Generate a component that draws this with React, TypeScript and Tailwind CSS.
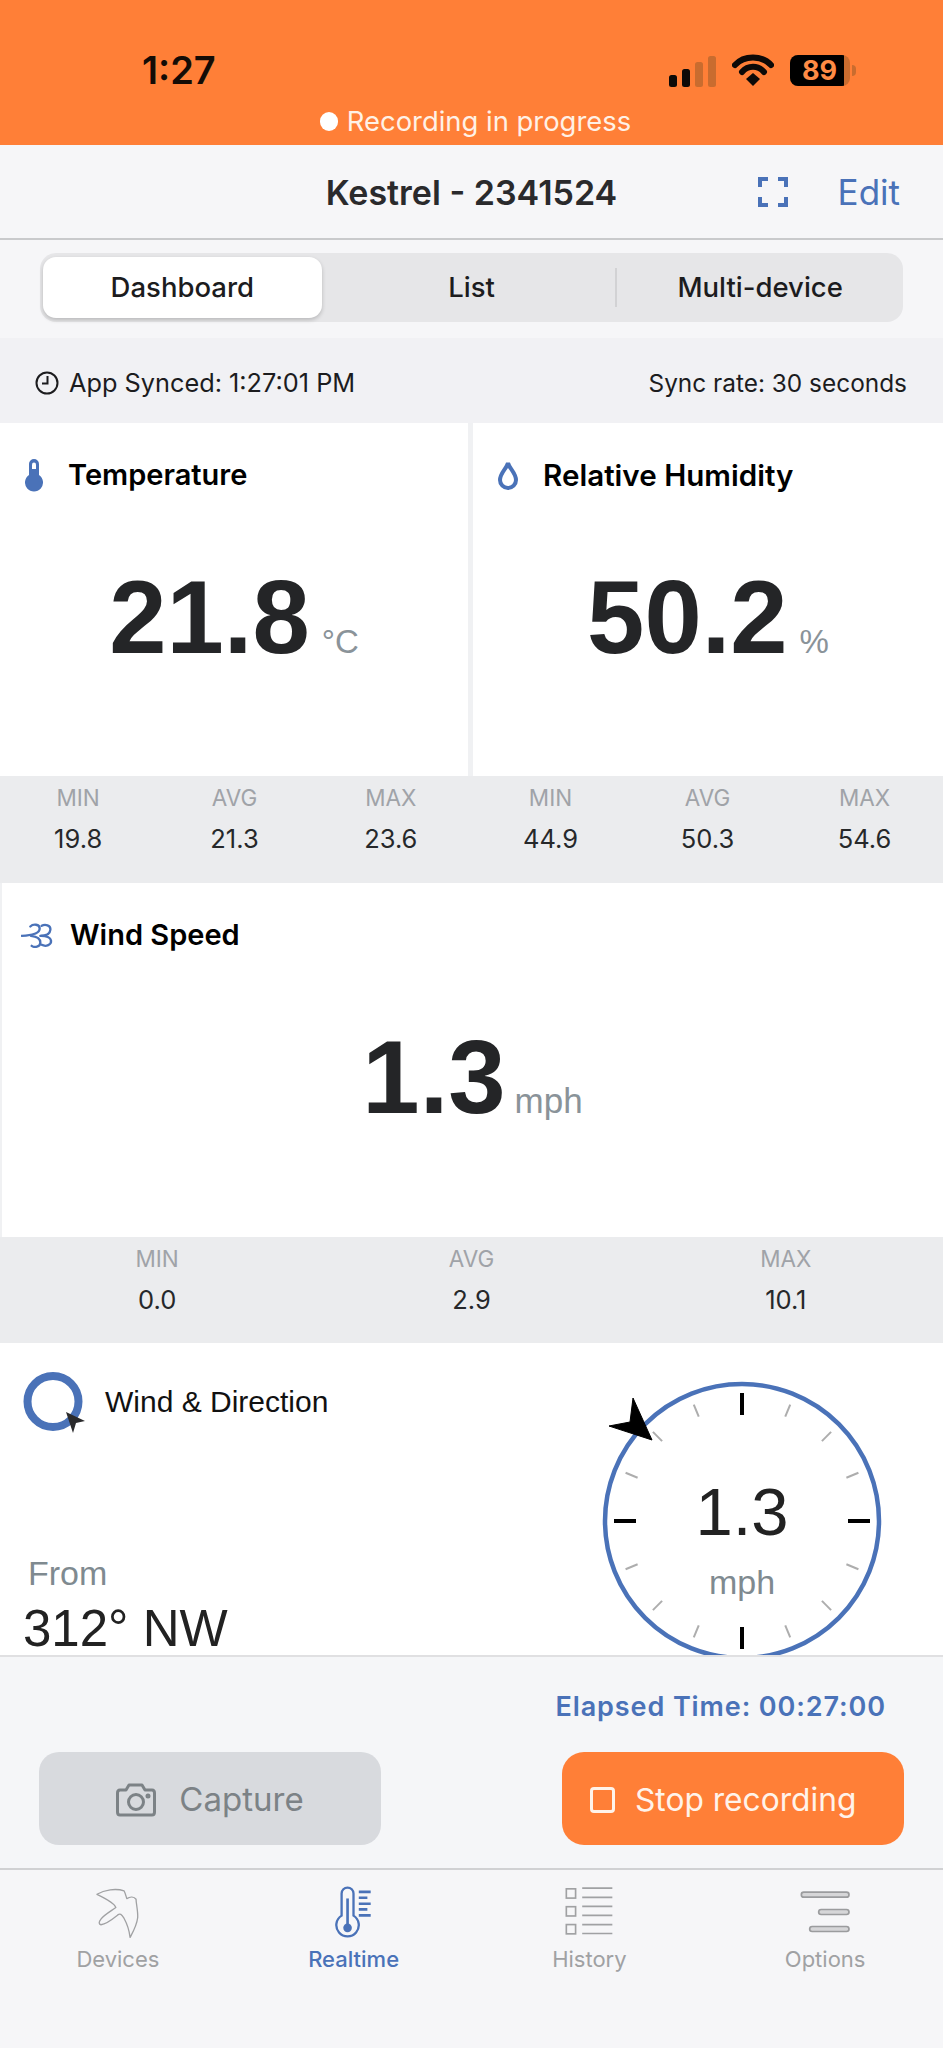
import React from 'react';

const BLUE = '#4a72b8';

const stats = {
    temp: [['MIN', '19.8'], ['AVG', '21.3'], ['MAX', '23.6']],
    humidity: [['MIN', '44.9'], ['AVG', '50.3'], ['MAX', '54.6']],
    wind: [['MIN', '0.0'], ['AVG', '2.9'], ['MAX', '10.1']],
};

const StatRow = ({ items, className }: { items: string[][]; className: string }) => (
    <div className={`grid grid-cols-3 bg-[#ebecee] pt-[9px] ${className}`}>
        {items.map(([label, value]) => (
            <div key={label} className="flex flex-col items-center">
                <span className="h-[26px] text-[22.500px] leading-[26px] text-[#a0a3a8]">{label}</span>
                <span className="mt-[13px] h-[30px] text-[25.500px] leading-[30px] text-[#26282a]">{value}</span>
            </div>
        ))}
    </div>
);

const Reading = ({ value, unit, unitClass, icon, title, titleClass }: { value: string; unit: string; unitClass: string; icon: React.ReactNode; title: string; titleClass: string }) => (
    <div className="h-full flex flex-col pt-[36px]">
        <div className={`flex items-center h-[32px] ${titleClass}`}>
            {icon}
            <span className="font-semibold text-black leading-[32px]">{title}</span>
        </div>
        <div className="mt-[75px] flex items-baseline justify-center font-['Liberation_Sans',sans-serif]">
            <span className="text-[103px] leading-[103px] font-bold text-[#242527]">{value}</span>
            <span className={`text-[#8a9399] ${unitClass}`}>{unit}</span>
        </div>
    </div>
);

const GaugeTicks = () => {
    const ticks = [];
    for (let i = 0; i < 16; i++) {
        const a = (i * 22.5 * Math.PI) / 180;
        const major = i % 4 === 0;
        const r1 = major ? 128 : 126;
        const r2 = major ? 106 : 113;
        ticks.push(
            <line
                key={i}
                x1={140 + r1 * Math.sin(a)}
                y1={140 - r1 * Math.cos(a)}
                x2={140 + r2 * Math.sin(a)}
                y2={140 - r2 * Math.cos(a)}
                stroke={major ? '#000' : '#adadad'}
                strokeWidth={major ? 4 : 2}
            />
        );
    }
    return <>{ticks}</>;
};

export default function App() {
    return (
        <div className="w-[943px] h-[2048px] overflow-hidden flex flex-col bg-[#f5f6f8] font-[Inter,sans-serif]">
            {/* Status bar */}
            <div className="h-[145px] shrink-0 bg-[#ff7f37] pt-[50px]">
                <div className="h-[40px] flex items-center justify-between pl-[142px] pr-[87px]">
                    <span className="text-[38px] font-semibold leading-[40px] text-[#140c06]">1:27</span>
                    <div className="flex items-center">
                        <svg width="47" height="31" viewBox="0 0 47 31" className="mt-[2px]">
                            <rect x="0" y="19" width="8" height="12" rx="2.5" fill="#0d0a08" />
                            <rect x="13" y="13" width="8" height="18" rx="2.5" fill="#0d0a08" />
                            <rect x="26" y="6" width="8" height="25" rx="2.5" fill="#c96c2f" />
                            <rect x="39" y="0" width="8" height="31" rx="2.5" fill="#c96c2f" />
                        </svg>
                        <svg width="42" height="32" viewBox="0 0 42 32" className="ml-[16px]">
                            <path d="M3 11 C12 1 30 1 39 11" fill="none" stroke="#0d0a08" strokeWidth="6" strokeLinecap="round" />
                            <path d="M10 18 C16 11 26 11 32 18" fill="none" stroke="#0d0a08" strokeWidth="6" strokeLinecap="round" />
                            <path d="M14 25 L21 19 L28 25 L21 32 Z" fill="#0d0a08" />
                        </svg>
                        <div className="ml-[16px] flex items-center">
                            <div className="w-[60px] h-[31px] rounded-[8px] bg-[#c96c2f] overflow-hidden">
                                <div className="w-[54px] h-full bg-black flex items-center justify-center pl-[5px]">
                                    <span className="text-[27px] font-bold leading-none text-[#ff8b45]">89</span>
                                </div>
                            </div>
                            <div className="ml-[2px] w-[4px] h-[11px] rounded-r-full bg-[#c96c2f]" />
                        </div>
                    </div>
                </div>
                <div className="mt-[15px] h-[32px] pl-[8px] flex items-center justify-center">
                    <span className="w-[18px] h-[19px] rounded-full bg-white" />
                    <span className="ml-[9px] text-[27.400px] leading-[32px] text-[#fff1e6]">Recording in progress</span>
                </div>
            </div>

            {/* Nav bar */}
            <div className="h-[95px] shrink-0 bg-[#f6f6f8] border-b-2 border-[#c9cacc] pt-[1px] grid grid-cols-[1fr_auto_1fr] items-center">
                <div />
                <span className="text-[34px] font-semibold text-[#2a2a2c]">Kestrel - 2341524</span>
                <div className="flex items-center justify-end pr-[43px]">
                    <svg width="30" height="30" viewBox="0 0 30 30" fill="none" stroke={BLUE} strokeWidth="4">
                        <path d="M2 10 V2 H10 M20 2 H28 V10 M28 20 V28 H20 M10 28 H2 V20" />
                    </svg>
                    <span className="ml-[50px] text-[35px] text-[#4a72b8]">Edit</span>
                </div>
            </div>

            {/* Segmented control */}
            <div className="h-[98px] shrink-0 bg-[#f6f6f8] pt-[13px] px-[40px]">
                <div className="h-[69px] rounded-[16px] bg-[#e6e6e8] grid grid-cols-3 items-center text-[27.500px] text-[#1c1c1e]">
                    <div className="h-[61px] ml-[3px] mr-[6px] pt-[1px] rounded-[13px] bg-white shadow-[0_2px_4px_rgba(0,0,0,0.2)] flex items-center justify-center font-medium">Dashboard</div>
                    <div className="pt-[1px] text-center font-medium">List</div>
                    <div className="h-[39px] pt-[1px] border-l-2 border-[#d2d2d4] flex items-center justify-center font-medium">Multi-device</div>
                </div>
            </div>

            {/* Sync info */}
            <div className="h-[85px] shrink-0 bg-[#f1f1f4] pt-[5px] pl-[35px] pr-[36px] flex items-center justify-between text-[#1c1c1e]">
                <div className="flex items-center">
                    <svg width="24" height="24" viewBox="0 0 24 24" fill="none" stroke="#1c1c1e" strokeWidth="2">
                        <circle cx="12" cy="12" r="10.5" />
                        <path d="M12.5 5 V12.5 H7" />
                    </svg>
                    <span className="ml-[10px] text-[25.300px]">App Synced: 1:27:01 PM</span>
                </div>
                <span className="text-[24.400px]">Sync rate: 30 seconds</span>
            </div>

            {/* Temperature + humidity */}
            <div className="h-[353px] shrink-0 bg-white grid grid-cols-[468px_1fr]">
                <div>
                    <Reading
                        value="21.8"
                        unit="°C"
                        unitClass="ml-[12px] text-[33px]"
                        title="Temperature"
                        titleClass="pl-[25px] text-[29px]"
                        icon={
                            <svg width="18" height="33" viewBox="0 0 18 33" className="mr-[25px]">
                                <path d="M4 16 V5 a5 5 0 0 1 10 0 V16 a9 9 0 1 1 -10 0 Z" fill={BLUE} />
                                <path d="M7 10 V5.5 a2 2 0 0 1 4 0 V10 Z" fill="#fff" />
                            </svg>
                        }
                    />
                </div>
                <div className="border-l-[5px] border-[#f0f1f3]">
                    <Reading
                        value="50.2"
                        unit="%"
                        unitClass="ml-[12px] text-[33px]"
                        title="Relative Humidity"
                        titleClass="pl-[25px] text-[29.600px]"
                        icon={
                            <svg width="20" height="30" viewBox="0 0 20 30" fill="none" className="mr-[25px]">
                                <path d="M10 3 C11 8 18 13 18 20 a8 8 0 0 1 -16 0 C2 13 9 8 10 3 Z" stroke={BLUE} strokeWidth="4" />
                            </svg>
                        }
                    />
                </div>
            </div>
            <div className="h-[107px] shrink-0 grid grid-cols-[469px_1fr] bg-[#ebecee]">
                <StatRow items={stats.temp} className="" />
                <StatRow items={stats.humidity} className="ml-[3px]" />
            </div>

            {/* Wind speed */}
            <div className="h-[354px] shrink-0 bg-white border-l-2 border-[#f0f1f3]">
                <Reading
                    value="1.3"
                    unit="mph"
                    unitClass="ml-[9px] text-[35px]"
                    title="Wind Speed"
                    titleClass="pl-[19px] text-[29px]"
                    icon={
                        <svg width="32" height="25" viewBox="60 40 96 74" fill="none" stroke={BLUE} strokeWidth="7" strokeLinecap="round" className="mr-[17px]">
                            <path d="M88 50 C96 42 116 42 116 56 C116 68 104 76 62 78" />
                            <path d="M92 108 C100 114 118 112 118 98 C118 86 108 80 90 78" />
                            <path d="M122 48 C132 42 150 46 148 60 C147 72 135 78 118 78" />
                            <path d="M122 105 C135 112 152 105 150 92 C148 82 135 78 120 78" />
                        </svg>
                    }
                />
            </div>
            <StatRow items={stats.wind} className="h-[106px] shrink-0" />

            {/* Wind & direction */}
            <div className="h-[314px] shrink-0 bg-white border-b-2 border-[#e0e0e2] overflow-hidden flex justify-between">
                <div className="flex flex-col font-['Liberation_Sans',sans-serif]">
                    <div className="flex items-center pl-[23px] pt-[29px]">
                        <svg width="64" height="62" viewBox="23 1372 64 62">
                            <circle cx="53" cy="1401.5" r="25.5" fill="none" stroke={BLUE} strokeWidth="8" />
                            <path d="M66 1412 L85 1421 L76 1423 L73 1433 Z" fill="#2a2a2c" />
                        </svg>
                        <span className="ml-[18px] -mt-[4px] text-[30px] text-[#111]">Wind &amp; Direction</span>
                    </div>
                    <span className="mt-[119px] pl-[28px] text-[34px] leading-[40px] text-[#7f8a90]">From</span>
                    <span className="mt-[14px] pl-[23px] text-[51px] leading-[44px] text-[#222]">312° NW</span>
                </div>
                <div className="relative w-[280px] h-[280px] mt-[38px] mr-[61px] shrink-0 font-['Liberation_Sans',sans-serif]">
                    <svg width="280" height="280" viewBox="0 0 280 280" className="overflow-visible">
                        <circle cx="140" cy="140" r="137" fill="none" stroke={BLUE} strokeWidth="4.5" />
                        <GaugeTicks />
                        <path d="M50 59 L31 17 L28 41 L7 45 Z" fill="#000" stroke="#000" strokeLinejoin="round" />
                    </svg>
                    <div className="absolute inset-0 flex flex-col items-center pt-[97px]">
                        <span className="text-[67px] leading-[67px] text-[#222]">1.3</span>
                        <span className="mt-[17px] text-[34px] leading-[40px] text-[#7f8a90]">mph</span>
                    </div>
                </div>
            </div>

            {/* Actions */}
            <div className="h-[211px] shrink-0 bg-[#f5f6f8]">
                <div className="h-[95px] flex items-start justify-end pr-[57px] pt-[33px]">
                    <span className="text-[27px] leading-[34px] font-semibold tracking-[0.9px] text-[#4a72b8]">Elapsed Time: 00:27:00</span>
                </div>
                <div className="flex justify-between px-[39px]">
                    <div className="w-[342px] h-[93px] rounded-[20px] bg-[#d8dade] flex items-center justify-center pt-[2px] text-[33px] text-[#7c8286]">
                        <svg width="40" height="34" viewBox="0 0 40 34" fill="none" stroke="#7c8286" strokeWidth="3" strokeLinejoin="round">
                            <path d="M4 7 H10 L13 2 H26 L29 7 H36 Q38.500 7 38.500 10 V29 Q38.500 32 36 32 H4 Q1.500 32 1.500 29 V10 Q1.500 7 4 7 Z" />
                            <circle cx="20" cy="19" r="7.500" />
                            <circle cx="32" cy="13" r="1" fill="#7c8286" />
                        </svg>
                        <span className="ml-[23px]">Capture</span>
                    </div>
                    <div className="w-[342px] h-[93px] rounded-[22px] bg-[#ff7f37] flex items-center pl-[28px] pt-[2px] text-[31.700px] text-[#fff3ea]">
                        <span className="w-[25px] h-[26px] rounded-[4px] border-[3px] border-[#fff3ea]" />
                        <span className="ml-[20px]">Stop recording</span>
                    </div>
                </div>
            </div>

            {/* Tab bar */}
            <div className="flex-1 border-t-2 border-[#d0d1d3] bg-[#f6f6f8] grid grid-cols-4 text-[22px]">
                <div className="flex flex-col items-center pt-[15px] text-[#a0a1a3]">
                    <div className="h-[54px] flex items-center">
                        <svg width="47" height="53" viewBox="100 40 140 160" fill="none" stroke="#a0a1a3" strokeWidth="4" strokeLinejoin="round">
                            <path d="M108 65 C130 52 165 46 190 55 C194 62 196 72 198 78 C208 72 220 72 226 80 C226 92 232 115 231 135 C228 160 216 180 208 195 C206 178 202 160 190 138 C182 125 178 122 170 128 C155 140 135 155 120 157 C112 155 114 148 120 140 C132 125 152 115 165 105 C162 92 135 78 108 65 Z" />
                        </svg>
                    </div>
                    <span className="mt-[6px] leading-[28px]">Devices</span>
                </div>
                <div className="flex flex-col items-center pt-[15px] text-[#4a72b8]">
                    <div className="h-[54px] flex items-center">
                        <svg width="38" height="55" viewBox="820 40 115 165" fill="none" stroke={BLUE}>
                            <path d="M840 132 V65 a18 18 0 0 1 36 0 V132 a34 34 0 1 1 -36 0 Z" strokeWidth="7" />
                            <path d="M858 80 V165" strokeWidth="8" />
                            <circle cx="858" cy="169" r="13" fill={BLUE} stroke="none" />
                            <path d="M892 60 H928 M892 78 H918 M892 96 H928 M892 113 H918 M892 131 H928" strokeWidth="8" />
                        </svg>
                    </div>
                    <span className="mt-[6px] leading-[28px] font-medium">Realtime</span>
                </div>
                <div className="flex flex-col items-center pt-[15px] text-[#a0a1a3]">
                    <div className="h-[54px] flex items-center">
                        <svg width="48" height="50" viewBox="105 50 145 150" fill="none" stroke="#a0a1a3" strokeWidth="5">
                            <rect x="109" y="55" width="28" height="28" />
                            <rect x="109" y="109" width="28" height="28" />
                            <rect x="109" y="163" width="28" height="28" />
                            <path d="M157 53 H248 M157 81 H248 M157 108 H248 M157 135 H248 M157 163 H248 M157 190 H248" />
                        </svg>
                    </div>
                    <span className="mt-[6px] leading-[28px]">History</span>
                </div>
                <div className="flex flex-col items-center pt-[15px] text-[#a0a1a3]">
                    <div className="h-[54px] flex items-center">
                        <svg width="50" height="42" viewBox="810 60 150 125" fill="none" stroke="#9b9c9e" strokeWidth="5">
                            <rect x="814" y="63" width="143" height="15" rx="7.500" fill="#d6d6d8" />
                            <rect x="866" y="115" width="91" height="15" rx="7.500" fill="#d6d6d8" />
                            <rect x="839" y="166" width="118" height="15" rx="7.500" fill="#d6d6d8" />
                        </svg>
                    </div>
                    <span className="mt-[6px] leading-[28px]">Options</span>
                </div>
            </div>
        </div>
    );
}
